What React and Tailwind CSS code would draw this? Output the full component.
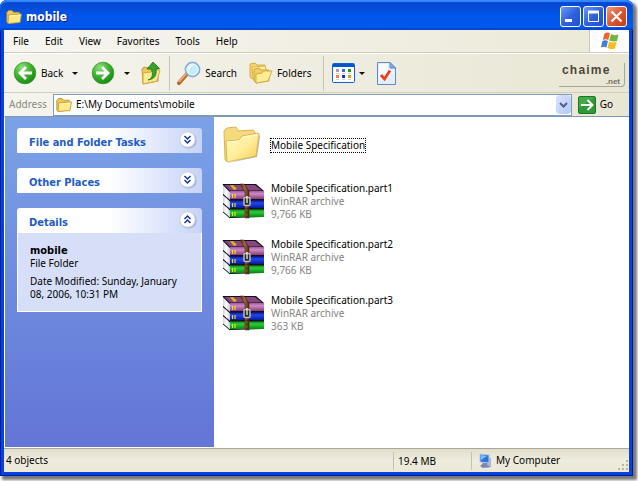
import React from "react";

function FolderIcon({ className }) {
  return (
    <svg viewBox="0 0 16 16" className={className} aria-hidden="true">
      <path d="M.8 3.500 2.500 1.500H6l1.500 1.700H13l.8 1V13L2 14.500.8 13z" fill="#f0c951" stroke="#b58a28" strokeWidth=".8" />
      <path d="M2.500 6 15.500 5 14 13.500 2 14.500z" fill="#ffe98b" stroke="#c0962c" strokeWidth=".8" />
      <path d="M3.500 7 14.500 6" stroke="#fffbd8" strokeWidth=".8" />
    </svg>
  );
}

function LargeFolderIcon() {
  return (
    <svg viewBox="0 0 40 40" className="h-10 w-10" aria-hidden="true">
      <defs>
        <linearGradient id="bigFolder" x1="0" y1="0" x2="1" y2="1">
          <stop offset="0" stopColor="#fff9c2" />
          <stop offset=".5" stopColor="#ffee9c" />
          <stop offset="1" stopColor="#f3ce52" />
        </linearGradient>
      </defs>
      <path d="M6 38 35 32 38 12 37 9 34 30z" fill="#8a8a8a" opacity=".6" />
      <path d="M2 6 5 3 14 2 16 6 31 5 33 7V12L30 30 4 36 3 34z" fill="#f5da7d" stroke="#d5ad42" strokeWidth=".9" />
      <path d="M4 16 17 15 20 11 36 8 37 9 34 31 5 37z" fill="url(#bigFolder)" stroke="#d8b348" strokeWidth=".9" />
      <path d="M5 17 17 16 21 12 35 10" fill="none" stroke="#fffbe0" />
    </svg>
  );
}

function RarIcon() {
  return (
    <svg viewBox="0 0 43 36" className="h-9 w-[43px]" aria-hidden="true">
      <defs>
        <linearGradient id="rarPurple" x1="0" y1="0" x2="0" y2="1">
          <stop offset="0" stopColor="#a4589c" /><stop offset=".35" stopColor="#cc8cc4" /><stop offset="1" stopColor="#843c7c" />
        </linearGradient>
        <linearGradient id="rarBlue" x1="0" y1="0" x2="0" y2="1">
          <stop offset="0" stopColor="#0a1ea8" /><stop offset=".35" stopColor="#2446e6" /><stop offset="1" stopColor="#0818a0" />
        </linearGradient>
        <linearGradient id="rarGreen" x1="0" y1="0" x2="0" y2="1">
          <stop offset="0" stopColor="#0a9418" /><stop offset=".35" stopColor="#2ccc3a" /><stop offset="1" stopColor="#088414" />
        </linearGradient>
        <linearGradient id="rarPages" x1="0" y1="0" x2="1" y2="0">
          <stop offset="0" stopColor="#d3d3e6" /><stop offset=".5" stopColor="#fff" /><stop offset="1" stopColor="#c8c8de" />
        </linearGradient>
        <linearGradient id="rarBelt" x1="0" y1="0" x2="1" y2="0">
          <stop offset="0" stopColor="#4c2a10" /><stop offset=".5" stopColor="#a06c3c" /><stop offset="1" stopColor="#4a2a10" />
        </linearGradient>
      </defs>
      <path d="M1 1H34L42 8V34L8 35 1 28z" fill="#171019" />
      <path d="M2 2H33L40 7.500H8z" fill="#87487f" />
      <path d="M1 2 8 9V17L1 11zM1 12 8 18.500V26L1 20zM1 21 8 27.500V34.500L1 28.500z" fill="url(#rarPages)" />
      <path d="M1 1.500 8 8.500M1 11.500 8 17.500M1 20.500 8 26.500M1 29 8 35" stroke="#222230" />
      <path d="M8 8H42V16H8z" fill="url(#rarPurple)" />
      <path d="M8 17.500H42V25H8z" fill="url(#rarBlue)" />
      <path d="M8 26.500H42V34H8z" fill="url(#rarGreen)" />
      <path d="M8 2.500 11 2 15 6 12 7z" fill="#dcb818" />
      <path d="M10.500 11V15M13 11V15M10.500 20V24M13 20V24M10.500 29V33M13 29V33" stroke="#e9e11c" strokeWidth="1.200" />
      <path d="M18 1H22L27 8V35H23V9z" fill="url(#rarBelt)" stroke="#321703" strokeWidth=".5" />
      <rect x="22" y="14.500" width="6" height="8" rx="1" fill="#292925" stroke="#c2c2b8" strokeWidth="1.400" />
      <path d="M25 13V20" stroke="#f0f0e8" strokeWidth="1.300" />
      <path d="M25 25V34" stroke="#2c1605" strokeDasharray="1 3" />
    </svg>
  );
}

function RoundArrow({ forward = false }) {
  return (
    <svg viewBox="0 0 24 24" className="h-6 w-6" aria-hidden="true">
      <defs>
        <radialGradient id="greenBall" cx="35%" cy="25%" r="75%">
          <stop offset="0" stopColor="#92dc7c" /><stop offset=".5" stopColor="#45b735" /><stop offset="1" stopColor="#188e15" />
        </radialGradient>
      </defs>
      <circle cx="12" cy="12" r="10.800" fill="url(#greenBall)" stroke="#369a2d" strokeWidth=".8" />
      <path d={forward ? "M5 12H17M11 6 17 12 11 18" : "M19 12H7M13 6 7 12 13 18"} fill="none" stroke="#fff" strokeWidth="2.800" />
    </svg>
  );
}

function Caret() {
  return <svg viewBox="0 0 6 3" className="h-[3px] w-[6px]" aria-hidden="true"><path d="M0 0H6L3 3z" fill="#111" /></svg>;
}

function UpIcon() {
  return (
    <svg viewBox="0 0 20 24" className="h-6 w-5" aria-hidden="true">
      <path d="M1 8 3 6 8 7 9 9 17 8V20L2 23z" fill="#edc65b" stroke="#c79c34" />
      <path d="M2 12 10 11 11 9 19 9 16 20 2 23z" fill="#ffeb94" stroke="#d2a941" />
      <path d="M7 19C12 17 12 13 10.500 8H6L12 1 18.500 7.500H15C16 14 14 18 7 19z" fill="#3aa32b" stroke="#187d14" strokeWidth=".8" />
    </svg>
  );
}

function SearchIcon() {
  return (
    <svg viewBox="0 0 24 24" className="h-6 w-6" aria-hidden="true">
      <path d="M2 22 10 13" stroke="#b56a2b" strokeWidth="4" strokeLinecap="round" />
      <path d="M2 21 9 13" stroke="#f3b66e" strokeWidth="1.500" />
      <circle cx="15.500" cy="8.500" r="7" fill="#c5ebff" stroke="#8fabdc" strokeWidth="1.800" />
      <circle cx="15.500" cy="8.500" r="5.600" fill="none" stroke="#f4fdff" />
      <path d="M11 8Q12 4 17 4Q13 6 12 10z" fill="#fff" />
    </svg>
  );
}

function FoldersIcon() {
  return (
    <svg viewBox="0 0 24 22" className="h-[22px] w-6" aria-hidden="true">
      <path d="M1 2 6 1 8 3 16 3V14L3 17 1 15z" fill="#f6d36c" stroke="#d4ac44" />
      <path d="M3 5 16 4 17 7V15L4 17z" fill="#fff0a0" stroke="#d9b44c" />
      <path d="M5 7 10 6 12 8 20 8V19L7 21 5 19z" fill="#f2ce62" stroke="#cfa53a" />
      <path d="M7 12 13 11 14 9 23 9 19 19 7 21z" fill="#ffed93" stroke="#d5ae44" />
    </svg>
  );
}

function ViewsIcon() {
  return (
    <svg viewBox="0 0 23 20" className="h-5 w-[23px]" aria-hidden="true">
      <rect x=".5" y=".5" width="22" height="19" rx="1" fill="#fff" stroke="#1261cf" />
      <path d="M1 1H22V4H1z" fill="#0754cf" />
      <path d="M4 6h3v3H4z" fill="#9e9ac9" /><path d="M10 6h3v3h-3z" fill="#376dc4" /><path d="M16 6h3v3h-3z" fill="#199a22" />
      <path d="M4 12h3v3H4z" fill="#f07d53" /><path d="M10 12h3v3h-3z" fill="#0740a0" /><path d="M16 12h3v3h-3z" fill="#d4a717" />
      <path d="M4 10.500h3M10 10.500h3M16 10.500h3M4 16.500h3M10 16.500h3M16 16.500h3" stroke="#d3d3d3" />
    </svg>
  );
}

function CheckPageIcon() {
  return (
    <svg viewBox="0 0 19 23" className="h-[23px] w-[19px]" aria-hidden="true">
      <path d="M.5.5H13L18.500 6V22.500H.5z" fill="#e2edff" stroke="#6288ce" />
      <path d="M2 2H11V8H17V11L2 19z" fill="#fff" opacity=".7" />
      <path d="M13 .5V6h5.500z" fill="#82a7e4" stroke="#6288ce" />
      <path d="M4 13 7.500 17 13 8.500" fill="none" stroke="#f03e18" strokeWidth="2.800" />
    </svg>
  );
}

function WindowsFlag() {
  return (
    <svg viewBox="0 0 20 18" className="h-[18px] w-5" aria-hidden="true">
      <path d="M4.500 1.500Q7-.5 10 1.500L8.300 8Q5.500 6.500 2.800 8z" fill="#ee642b" />
      <path d="M11 2Q14 4 18.500 2.500L17 9Q13 10 9.400 8.400z" fill="#70b63b" />
      <path d="M2.500 9Q5 7.500 8 9L6.400 15.500Q3.500 14 .8 15.500z" fill="#3f7fdb" />
      <path d="M9 9.500Q12 11.200 16.500 10L15 16.500Q11 18 7.400 16z" fill="#f4bd27" />
    </svg>
  );
}

function CaptionButton({ label, close = false, children }) {
  return (
    <button aria-label={label} className={`flex h-[21px] w-[21px] items-center justify-center rounded-[3px] border border-white ${close ? "bg-linear-to-br from-[#f0967b] via-[#df5632] to-[#c63b17]" : "bg-linear-to-br from-[#6f98f4] via-[#2f62de] to-[#1e4fd0]"}`}>
      <svg viewBox="0 0 19 19" className="h-[19px] w-[19px]" fill="none" stroke="#fff" aria-hidden="true">{children}</svg>
    </button>
  );
}

function TaskHeader({ title, open = false }) {
  return (
    <button aria-expanded={open} className="flex h-[25px] w-full items-center justify-between rounded-t-[3px] bg-linear-to-r from-white from-50% to-[#c6d3f7] pr-[5px] pl-3 text-left font-['DejaVu_Sans_Condensed','DejaVu_Sans',sans-serif] text-[11px] font-bold text-[#215dc6]">
      <span className="pt-1">{title}</span>
      <svg viewBox="0 0 18 18" className="mb-[2px] h-[18px] w-[18px]" aria-hidden="true">
        <circle cx="9.500" cy="9.500" r="8.200" fill="#8996bc" opacity=".5" />
        <circle cx="8.500" cy="8.500" r="7.700" fill="#fff" stroke="#c3cbe4" strokeWidth=".8" />
        <path d={open ? "M5.500 8 8.500 5 11.500 8M5.500 12 8.500 9 11.500 12" : "M5.500 5 8.500 8 11.500 5M5.500 9 8.500 12 11.500 9"} fill="none" stroke="#123994" strokeWidth="1.500" />
      </svg>
    </button>
  );
}

const archives = [
  { name: "Mobile Specification.part1", size: "9,766 KB" },
  { name: "Mobile Specification.part2", size: "9,766 KB" },
  { name: "Mobile Specification.part3", size: "363 KB" },
];

export default function App() {
  return (
    <div className="flex min-h-screen bg-white pr-[5px] pb-[5px] font-['Noto_Sans',sans-serif] text-[10px] leading-[13px] text-black">
      <main className="flex min-w-0 flex-1 flex-col rounded-t-[7px] bg-[#0542dd] px-1 pb-1 shadow-[3px_3px_3px_1px_#777,inset_1px_-1px_0_#001da0,inset_-1px_-1px_0_#001590]">
        <header className="-mx-1 flex h-[30px] items-center rounded-t-[7px] bg-linear-to-b from-[#0843c8] via-[#0056e8] to-[#0058ee] pt-[3px] pr-[6px] pl-[6px] shadow-[inset_0_2px_1px_#3789ff,inset_0_-2px_1px_#0047d0]">
          <FolderIcon className="h-4 w-4" />
          <h1 className="ml-1 flex-1 font-['DejaVu_Sans_Condensed','DejaVu_Sans',sans-serif] text-xs font-bold text-white [text-shadow:1px_1px_#0a1883]">mobile</h1>
          <div className="flex gap-[2px]">
            <CaptionButton label="Minimize"><path d="M4 13.500H11" strokeWidth="3" /></CaptionButton>
            <CaptionButton label="Maximize"><path d="M4.500 4.500H14.500V14.500H4.500z" /><path d="M4 5H15" strokeWidth="3" /></CaptionButton>
            <CaptionButton label="Close" close><path d="M4.500 4.500 14.500 14.500M14.500 4.500 4.500 14.500" strokeWidth="2.200" /></CaptionButton>
          </div>
        </header>

        <nav aria-label="Menu" className="flex h-[23px] items-center border-b border-[#d0cdbd] bg-linear-to-r from-[#f6f5f0] to-[#ece9d8] pl-[9px]">
          <div className="flex flex-1 gap-4">
            <button>File</button><button>Edit</button><button>View</button><button>Favorites</button><button>Tools</button><button>Help</button>
          </div>
          <div className="flex h-full w-10 items-center justify-center border-l border-[#c9c6b6] bg-white"><WindowsFlag /></div>
        </nav>

        <div className="flex h-10 items-center border-t border-b border-t-white border-b-[#d3cfbd] bg-linear-to-r from-[#f5f4ed] to-[#e9e6d4] pr-1 pl-[9px]">
          <button className="flex items-center gap-1"><RoundArrow />Back</button>
          <button aria-label="Back history" className="ml-[9px]"><Caret /></button>
          <button aria-label="Forward" className="ml-[13px]"><RoundArrow forward /></button>
          <button aria-label="Forward history" className="ml-[9px]"><Caret /></button>
          <button aria-label="Up" className="ml-[11px]"><UpIcon /></button>
          <span className="mr-[7px] ml-2 h-[35px] w-px bg-[#cac6b4]" />
          <button className="flex items-center gap-1"><SearchIcon />Search</button>
          <button className="ml-3 flex items-center gap-1"><FoldersIcon />Folders</button>
          <span className="mr-2 ml-3 h-[35px] w-px bg-[#cac6b4]" />
          <button aria-label="Views" className="flex items-center gap-1"><ViewsIcon /><Caret /></button>
          <button aria-label="Properties" className="ml-3"><CheckPageIcon /></button>
          <div className="mt-1 ml-auto flex h-6 w-[66px] flex-col rounded-br-sm border-r border-b border-[#aaa594] pr-1 pl-[3px] font-['Liberation_Sans',sans-serif] font-bold text-[#4c4639]">
            <span className="text-[12px] leading-[14px] tracking-widest">chaime</span>
            <span className="text-right text-[8px] leading-[9px] text-[#777164]">.net</span>
          </div>
        </div>

        <div className="flex h-[23px] items-center bg-linear-to-r from-[#f5f4ed] to-[#e9e6d4] pr-4 pl-[5px]">
          <label htmlFor="address" className="mr-1 w-10 text-[#8b897e]">Address</label>
          <div className="flex h-[22px] min-w-0 flex-1 items-center border border-[#7f9db9] bg-white pl-[2px]">
            <FolderIcon className="h-4 w-4" />
            <input id="address" defaultValue="E:\My Documents\mobile" className="ml-1 min-w-0 flex-1 bg-transparent outline-none" />
            <button aria-label="Show addresses" className="flex h-[19px] w-[15px] items-center justify-center rounded-sm bg-linear-to-br from-[#d9e4ff] to-[#b4c8f6]">
              <svg viewBox="0 0 9 6" className="h-[6px] w-[9px]" aria-hidden="true"><path d="M1 1 4.500 4.500 8 1" fill="none" stroke="#4d6185" strokeWidth="2" /></svg>
            </button>
          </div>
          <button className="ml-[6px] flex items-center gap-1">
            <svg viewBox="0 0 18 18" className="h-[18px] w-[18px]" aria-hidden="true"><rect x=".5" y=".5" width="17" height="17" rx="1.500" fill="#2d9a38" stroke="#187723" /><path d="M1 1H17L1 12z" fill="#69bd64" opacity=".4" /><path d="M3 9H14M9.500 4 14.500 9 9.500 14" fill="none" stroke="#fff" strokeWidth="2" /></svg>
            Go
          </button>
        </div>

        <div className="flex flex-1 border-y border-l border-t-[#8394ad] border-b-white border-l-white bg-white">
          <aside className="flex w-[209px] shrink-0 flex-col gap-[15px] bg-linear-to-b from-[#7ba2e7] to-[#6375d6] py-[11px] pr-3 pl-3">
            <TaskHeader title="File and Folder Tasks" />
            <TaskHeader title="Other Places" />
            <section>
              <TaskHeader title="Details" open />
              <div className="border border-t-0 border-white bg-[#d6dff7] px-3 pt-[11px] pb-[10px]">
                <h2 className="font-['DejaVu_Sans_Condensed','DejaVu_Sans',sans-serif] text-[11px] font-bold">mobile</h2>
                <p>File Folder</p>
                <p className="mt-[5px]">Date Modified: Sunday, January 08, 2006, 10:31 PM</p>
              </div>
            </section>
          </aside>
          <section aria-label="Files" className="min-w-0 flex-1 pt-2 pl-2">
            <button className="flex h-10 items-center gap-[9px] text-left"><LargeFolderIcon /><span className="outline outline-1 outline-dotted outline-black">Mobile Specification</span></button>
            <ul className="mt-4 flex flex-col gap-[16px]">
              {archives.map((file) => (
                <li key={file.name} className="flex h-10 items-center gap-[6px]">
                  <RarIcon />
                  <div className="text-[#85857f]"><p className="text-black">{file.name}</p><p>WinRAR archive</p><p>{file.size}</p></div>
                </li>
              ))}
            </ul>
          </section>
        </div>

        <footer className="flex h-6 items-center border-t border-[#aaa798] bg-linear-to-b from-[#e1decd] via-[#efecdf] to-[#ebe8d7] pl-[2px]">
          <span className="flex-1">4 objects</span>
          <span className="h-[18px] w-[78px] border-l border-[#c5c2b1] pt-[3px] pl-1">19.4 MB</span>
          <div className="flex h-[18px] w-[158px] items-center gap-1 border-l border-[#c5c2b1] pl-[6px]">
            <svg viewBox="0 0 14 16" className="h-4 w-[14px]" aria-hidden="true"><path d="M8 3 13 5V14L9 15z" fill="#aeb3ca" /><path d="M2 1 11 2V10L2 9z" fill="#2a75dc" stroke="#b7c6e2" /><path d="M3 2 9 3 3 7z" fill="#75bef6" /><path d="M5 10H9V12L12 14 5 15 2 13z" fill="#7c86b3" /></svg>
            <span className="flex-1">My Computer</span>
            <svg viewBox="0 0 12 12" className="mt-2 h-3 w-3" fill="#b9b5a2" aria-hidden="true"><path d="M9 1h2v2H9zM5 5h2v2H5zM9 5h2v2H9zM1 9h2v2H1zM5 9h2v2H5zM9 9h2v2H9z" /></svg>
          </div>
        </footer>
      </main>
    </div>
  );
}
